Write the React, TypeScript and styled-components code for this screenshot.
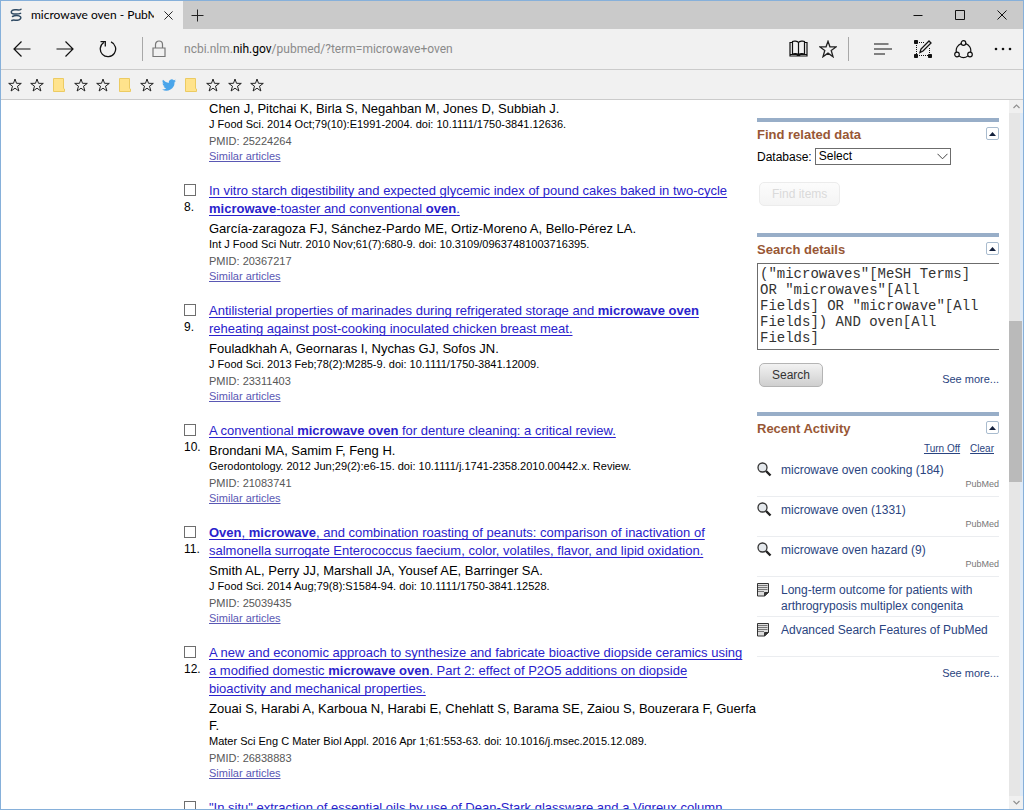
import React from "react";
import styled, { createGlobalStyle } from "styled-components";

const GlobalStyle = createGlobalStyle`
  *, *::before, *::after { box-sizing: border-box; }
  html, body { margin: 0; padding: 0; }
  body { font-family: "Liberation Sans", Arial, sans-serif; color: #000; background: #fff; }
  a { text-decoration-skip-ink: none; }
  button { padding: 0; margin: 0; border: 0; background: none; color: inherit; font: inherit; cursor: pointer; }
`;

/* ---------- browser window ---------- */

const Window = styled.div`
  display: flex;
  flex-direction: column;
  height: 100vh;
  overflow: hidden;
  border: 1px solid #86b0da;
  background: #fff;
`;

const TabStrip = styled.div`
  display: flex;
  height: 28px;
  background: #cacaca;
  font-family: Lato, "Open Sans", sans-serif;
`;

const Tab = styled.div`
  display: flex;
  align-items: center;
  gap: 8px;
  width: 182px;
  padding: 0 8px;
  background: #f1f1f1;
`;

const TabTitle = styled.span`
  flex: 1;
  overflow: hidden;
  white-space: nowrap;
  font-size: 12px;
  line-height: 16px;
`;

const IconButton = styled.button<{ $width: number }>`
  display: flex;
  flex: none;
  align-items: center;
  justify-content: center;
  width: ${(p) => p.$width}px;
  height: 100%;
`;

const Spacer = styled.div`
  flex: 1;
`;

const Toolbar = styled.div`
  display: flex;
  align-items: center;
  height: 41px;
  background: #f1f1f1;
  border-bottom: 1px solid #cbcbcb;
`;

const Divider = styled.div`
  width: 1px;
  height: 24px;
  background: #a8a8a8;
`;

const NavGroup = styled.div`
  display: flex;
  align-items: center;
  height: 100%;
  margin-right: 13px;
`;

const ToolGroup = styled.div`
  display: flex;
  align-items: center;
  height: 100%;
`;

const ToolDivider = styled(Divider)`
  margin: 0 14px 0 5px;
`;

const Address = styled.div`
  flex: 1;
  display: flex;
  align-items: center;
  gap: 18px;
  padding-left: 9px;
  font-family: Roboto, "Open Sans", sans-serif;
  font-size: 12px;
  line-height: 16px;
  color: #8a8a8a;
  b { font-weight: 400; color: #000; }
`;

const FavoritesBar = styled.div`
  display: flex;
  align-items: center;
  gap: 8px;
  height: 30px;
  padding-left: 7px;
  background: #f1f1f1;
  border-bottom: 1px solid #cbcbcb;
`;

const Favorite = styled.a`
  display: block;
  width: 14px;
  height: 14px;
  svg { display: block; }
`;

const Viewport = styled.div`
  flex: 1;
  display: flex;
  min-height: 0;
  overflow: hidden;
`;

const ScrollTrack = styled.div`
  display: flex;
  flex-direction: column;
  flex: none;
  width: 14px;
  background: #e6e6e6;
  border-right: 3px solid #dfeaf6;
`;

const ScrollArrow = styled.button`
  display: flex;
  align-items: center;
  justify-content: center;
  width: 14px;
  height: 13px;
  background: #f0f0f0;
`;

const ScrollRail = styled.div`
  flex: 1;
  display: grid;
  grid-template-rows: 30.5% 23.5% 1fr;
`;

const ScrollThumb = styled.div`
  grid-row: 2;
  width: 13px;
  background: #bababa;
`;

/* ---------- page ---------- */

const Page = styled.div`
  flex: 1;
  display: grid;
  grid-template-columns: minmax(0, 1fr) 242px;
  align-items: start;
  padding: 0 10px 0 182px;
`;

const Results = styled.main`
  display: flex;
  flex-direction: column;
  gap: 18px;
`;

const Article = styled.article`
  display: grid;
  grid-template-columns: 26px minmax(0, 1fr);
`;

const Marker = styled.label`
  display: flex;
  flex-direction: column;
  gap: 4px;
  align-items: flex-start;
  padding-top: 2px;
  font-size: 12px;
  line-height: 14px;
`;

const Tick = styled.input`
  appearance: none;
  width: 12px;
  height: 12px;
  margin: 0 0 0 1px;
  border: 1px solid #6e6e6e;
  background: #fff;
`;

const Index = styled.span`
  padding-left: 1px;
`;

const Title = styled.h2`
  margin: 0 12px 2px 0;
  font-size: 13px;
  font-weight: 400;
  line-height: 18px;
  a { color: #2a22cc; text-decoration: underline; text-underline-offset: 2px; }
`;

const Authors = styled.p`
  margin: 0 -8px 0 0;
  font-size: 13px;
  line-height: 17px;
`;

const Journal = styled.p`
  margin: 0 0 1px;
  font-size: 11px;
  line-height: 15px;
`;

const Pmid = styled.p`
  margin: 0;
  font-size: 11px;
  line-height: 16px;
  color: #575757;
`;

const Similar = styled.p`
  margin: 0;
  font-size: 11px;
  line-height: 15px;
  a { color: #5a58b4; }
`;

/* ---------- side column ---------- */

const Side = styled.aside`
  padding-top: 18px;
`;

const Panel = styled.section`
  border-top: 4px solid #98aec8;
  padding-top: 5px;
`;

const PanelHead = styled.div`
  display: flex;
  justify-content: space-between;
  align-items: flex-start;
  height: 21px;
`;

const PanelTitle = styled.h3`
  margin: 0;
  font-size: 13px;
  line-height: 16px;
  color: #985735;
`;

const Collapse = styled.button`
  display: flex;
  align-items: center;
  justify-content: center;
  width: 13px;
  height: 13px;
  border: 1px solid #a9bccf;
  border-radius: 2px;
`;

const DatabaseRow = styled.div`
  display: flex;
  align-items: center;
  gap: 3px;
  height: 17px;
  font-size: 12px;
`;

const SelectBox = styled.div`
  display: grid;
  width: 136px;
  height: 17px;
  > * { grid-area: 1 / 1; }
  svg { justify-self: end; align-self: center; margin-right: 3px; pointer-events: none; }
`;

const Select = styled.select`
  appearance: none;
  padding: 0 3px;
  border: 1px solid #6c6c6c;
  border-radius: 0;
  background: #fff;
  font: 12px/15px "Liberation Sans", Arial, sans-serif;
  color: #000;
`;

const PillButton = styled.button`
  height: 24px;
  margin-left: 2px;
  padding: 0 12px;
  border: 1px solid #b4b4b4;
  border-radius: 5px;
  background: linear-gradient(#f2f2f2, #cfcfcf);
  font-size: 12px;
  line-height: 22px;
  color: #333;
  &:disabled {
    border-color: #ececec;
    background: linear-gradient(#fcfcfc, #f4f4f4);
    color: #dadada;
    cursor: default;
  }
`;

const FindRow = styled.div`
  padding: 17px 0 27px;
  display: flex;
`;

const QueryClip = styled.div`
  display: flex;
  overflow: hidden;
`;

const Query = styled.textarea`
  flex: none;
  width: calc(100% + 12px);
  height: 87px;
  margin: 0;
  padding: 2px 28px 2px 2px;
  border: 1px solid #6c6c6c;
  resize: none;
  overflow: hidden;
  font: 14px/16px "Liberation Mono", "Courier New", monospace;
  color: #333;
`;

const SearchRow = styled.div`
  display: flex;
  align-items: flex-start;
  justify-content: space-between;
  padding: 13px 0 25px;
`;

const SideLink = styled.a`
  font-size: 11px;
  line-height: 14px;
  color: #2a4480;
  text-decoration: none;
`;

const SearchMore = styled(SideLink)`
  padding-top: 9px;
`;

const ListMore = styled(SideLink)`
  display: block;
  padding-top: 9px;
  text-align: right;
`;

const Actions = styled.div`
  display: flex;
  justify-content: flex-end;
  gap: 10px;
  height: 15px;
  padding-right: 5px;
  font-size: 10px;
  line-height: 13px;
  a { color: #2a4480; }
`;

const ActivityList = styled.ul`
  margin: 0;
  padding: 0;
  list-style: none;
`;

const ActivityItem = styled.li`
  display: grid;
  grid-template-columns: 24px 1fr;
  align-content: start;
  min-height: 40px;
  padding-top: 5px;
  border-bottom: 1px solid #ebedf0;
  svg { display: block; }
`;

const ActivityLink = styled.a`
  font-size: 12px;
  line-height: 16px;
  color: #2a4480;
  text-decoration: none;
`;

const Source = styled.span`
  grid-column: 2;
  text-align: right;
  font-size: 9px;
  line-height: 12px;
  color: #777;
`;

/* ---------- icons ---------- */

const Star = ({ size = 14 }: { size?: number }) => (
  <svg width={size} height={size} viewBox="0 0 14 14" fill="none" stroke="#222" strokeWidth="1" strokeLinejoin="miter">
    <path d="M7 1 8.500 5.300 13.300 5.400 9.500 8.200 10.900 13 7 10.200 3.100 13 4.500 8.200.7 5.400 5.500 5.300Z" />
  </svg>
);

const Folder = () => (
  <svg width="14" height="14" viewBox="0 0 14 14">
    <path d="M1.500.5h10v10l1 .5v2.500h-11z" fill="#ffe38c" stroke="#eccb62" />
  </svg>
);

const Bird = () => (
  <svg width="14" height="14" viewBox="0 0 24 24" fill="#4aa5ea">
    <path d="M24 4.600a10 10 0 0 1-2.800.8 5 5 0 0 0 2.100-2.700 10 10 0 0 1-3.100 1.200 4.900 4.900 0 0 0-8.400 4.500A14 14 0 0 1 1.700 3.200a4.900 4.900 0 0 0 1.500 6.500 4.900 4.900 0 0 1-2.200-.6 4.900 4.900 0 0 0 3.900 4.900 5 5 0 0 1-2.200.1 4.900 4.900 0 0 0 4.600 3.400A9.900 9.900 0 0 1 0 19.500a14 14 0 0 0 21.500-12.400A10 10 0 0 0 24 4.600z" />
  </svg>
);

const Favicon = () => (
  <svg width="14" height="14" viewBox="0 0 14 14" fill="none" stroke="#2f4a63" strokeWidth="1.500" strokeLinecap="round">
    <path d="M12 1.200C9.500 3.300 6 .3 3.300 2.300 1.200 4.300 2.500 5.700 5 6c2.600.2 4.600.2 6.600-.6" />
    <path d="M3.500 8.500c2.500-1.400 6.500-1.200 8 .2 1.200 1.600-.8 3.400-3 3.600-2.200.2-4-.8-5.700.2" />
  </svg>
);

const Close = ({ size }: { size: number }) => (
  <svg width={size} height={size} viewBox="0 0 10 10" stroke="#111" strokeWidth="1">
    <path d="M.5.5l9 9M9.500.5l-9 9" />
  </svg>
);

const Chevron = ({ up }: { up?: boolean }) => (
  <svg width="7" height="5" viewBox="0 0 7 5" fill="none" stroke="#909090" strokeWidth="1.200">
    <path d={up ? "M.5 4 3.500 1l3 3" : "M.5 1l3 3 3-3"} />
  </svg>
);

const Magnifier = () => (
  <svg width="15" height="15" viewBox="0 0 15 15" fill="none">
    <circle cx="5.500" cy="5.500" r="4.500" fill="#e4e8ec" stroke="#333" strokeWidth="1.300" />
    <path d="M9 9l4.500 4.500" stroke="#222" strokeWidth="2.400" />
  </svg>
);

const Note = () => (
  <svg width="12" height="15" viewBox="0 0 12 15" fill="none" stroke="#333">
    <path d="M.5 1.500h11v8.500l-4 4h-7z" fill="#ddd" />
    <path d="M1 3.500h9.500M1 5.500h9.500M1 7.500h9.500M1 9.500h6" stroke="#777" />
    <path d="M7.500 14v-3.500h4z" fill="#333" />
  </svg>
);

/* ---------- content ---------- */

type ArticleData = {
  no?: string;
  title?: React.ReactNode;
  authors?: string;
  journal?: string;
  pmid?: string;
};

const articles: ArticleData[] = [
  {
    authors: "Chen J, Pitchai K, Birla S, Negahban M, Jones D, Subbiah J.",
    journal: "J Food Sci. 2014 Oct;79(10):E1991-2004. doi: 10.1111/1750-3841.12636.",
    pmid: "25224264",
  },
  {
    no: "8.",
    title: <>In vitro starch digestibility and expected glycemic index of pound cakes baked in two-cycle <b>microwave</b>-toaster and conventional <b>oven</b>.</>,
    authors: "García-zaragoza FJ, Sánchez-Pardo ME, Ortiz-Moreno A, Bello-Pérez LA.",
    journal: "Int J Food Sci Nutr. 2010 Nov;61(7):680-9. doi: 10.3109/09637481003716395.",
    pmid: "20367217",
  },
  {
    no: "9.",
    title: <>Antilisterial properties of marinades during refrigerated storage and <b>microwave oven</b> reheating against post-cooking inoculated chicken breast meat.</>,
    authors: "Fouladkhah A, Geornaras I, Nychas GJ, Sofos JN.",
    journal: "J Food Sci. 2013 Feb;78(2):M285-9. doi: 10.1111/1750-3841.12009.",
    pmid: "23311403",
  },
  {
    no: "10.",
    title: <>A conventional <b>microwave oven</b> for denture cleaning: a critical review.</>,
    authors: "Brondani MA, Samim F, Feng H.",
    journal: "Gerodontology. 2012 Jun;29(2):e6-15. doi: 10.1111/j.1741-2358.2010.00442.x. Review.",
    pmid: "21083741",
  },
  {
    no: "11.",
    title: <><b>Oven</b>, <b>microwave</b>, and combination roasting of peanuts: comparison of inactivation of salmonella surrogate Enterococcus faecium, color, volatiles, flavor, and lipid oxidation.</>,
    authors: "Smith AL, Perry JJ, Marshall JA, Yousef AE, Barringer SA.",
    journal: "J Food Sci. 2014 Aug;79(8):S1584-94. doi: 10.1111/1750-3841.12528.",
    pmid: "25039435",
  },
  {
    no: "12.",
    title: <>A new and economic approach to synthesize and fabricate bioactive diopside ceramics using a modified domestic <b>microwave oven</b>. Part 2: effect of P2O5 additions on diopside bioactivity and mechanical properties.</>,
    authors: "Zouai S, Harabi A, Karboua N, Harabi E, Chehlatt S, Barama SE, Zaiou S, Bouzerara F, Guerfa F.",
    journal: "Mater Sci Eng C Mater Biol Appl. 2016 Apr 1;61:553-63. doi: 10.1016/j.msec.2015.12.089.",
    pmid: "26838883",
  },
  {
    no: "",
    title: <>"In situ" extraction of essential oils by use of Dean-Stark glassware and a Vigreux column</>,
  },
];

const activity = [
  { text: "microwave oven cooking (184)", source: "PubMed" },
  { text: "microwave oven (1331)", source: "PubMed" },
  { text: "microwave oven hazard (9)", source: "PubMed" },
  { text: "Long-term outcome for patients with arthrogryposis multiplex congenita" },
  { text: "Advanced Search Features of PubMed" },
];

const favorites = ["star", "star", "folder", "star", "star", "folder", "star", "bird", "folder", "star", "star", "star"];

const ArticleRow = ({ no, title, authors, journal, pmid }: ArticleData) => (
  <Article>
    {title ? (
      <Marker>
        <Tick type="checkbox" aria-label="Select article" />
        <Index>{no}</Index>
      </Marker>
    ) : (
      <span />
    )}
    <div>
      {title && <Title><a href="#article">{title}</a></Title>}
      {authors && <Authors>{authors}</Authors>}
      {journal && <Journal>{journal}</Journal>}
      {pmid && <Pmid>PMID: {pmid}</Pmid>}
      {pmid && <Similar><a href="#similar">Similar articles</a></Similar>}
    </div>
  </Article>
);

const PanelHeader = ({ children }: { children: React.ReactNode }) => (
  <PanelHead>
    <PanelTitle>{children}</PanelTitle>
    <Collapse aria-label="Collapse">
      <svg width="7" height="4" viewBox="0 0 7 4"><path d="M0 4 3.500 0 7 4z" fill="#14213d" /></svg>
    </Collapse>
  </PanelHead>
);

export default function App() {
  return (
    <Window>
      <GlobalStyle />
      <TabStrip>
        <Tab>
          <Favicon />
          <TabTitle>microwave oven - PubMed</TabTitle>
          <IconButton $width={13} aria-label="Close tab"><Close size={9} /></IconButton>
        </Tab>
        <IconButton $width={28} aria-label="New tab">
          <svg width="13" height="13" viewBox="0 0 13 13" stroke="#222"><path d="M6.500.5v12M.5 6.500h12" /></svg>
        </IconButton>
        <Spacer />
        <IconButton $width={42} aria-label="Minimize">
          <svg width="10" height="10" viewBox="0 0 10 10" stroke="#111"><path d="M.5 5.500h9" /></svg>
        </IconButton>
        <IconButton $width={42} aria-label="Maximize">
          <svg width="10" height="10" viewBox="0 0 10 10" fill="none" stroke="#111"><path d="M.5.5h9v9h-9z" /></svg>
        </IconButton>
        <IconButton $width={42} aria-label="Close"><Close size={10} /></IconButton>
      </TabStrip>

      <Toolbar>
        <NavGroup>
          <IconButton $width={42} aria-label="Back">
            <svg width="18" height="16" viewBox="0 0 18 16" fill="none" stroke="#111" strokeWidth="1.200"><path d="M17.500 8H1M8.500.5 1 8l7.500 7.500" /></svg>
          </IconButton>
          <IconButton $width={44} aria-label="Forward">
            <svg width="18" height="16" viewBox="0 0 18 16" fill="none" stroke="#111" strokeWidth="1.200"><path d="M.5 8H17M9.500.5 17 8l-7.500 7.500" /></svg>
          </IconButton>
          <IconButton $width={42} aria-label="Refresh">
            <svg width="18" height="18" viewBox="0 0 18 18" fill="none" stroke="#111" strokeWidth="1.300"><path d="M12 1.900a7.700 7.700 0 1 1-7.200.6M1.500 1.700h4.800v4.800" /></svg>
          </IconButton>
        </NavGroup>
        <Divider />
        <Address>
          <svg width="14" height="18" viewBox="0 0 14 18" fill="none" stroke="#777" strokeWidth="1.200"><path d="M1 8h12v8.500H1zM3.500 8V4.500a3.500 3.500 0 0 1 7 0V8" /></svg>
          <span>ncbi.nlm.<b>nih.gov</b>/pubmed/?term=microwave+oven</span>
        </Address>
        <ToolGroup>
          <IconButton $width={30} aria-label="Reading view">
            <svg width="19" height="18" viewBox="0 0 19 18" fill="none" stroke="#111" strokeWidth="1.200"><path d="M9.500 2.500C8.500.8 4.500.8 3.500 1.500v12.500c2-.7 5-.5 6 1 1-1.500 4-1.700 6-1V1.500c-1-.7-5-.7-6 1zM9.500 2.500V15M3.500 2.500h-2.500v13.500h17V2.500h-2.500M1.500 14.500h6l2 1 2-1h6" /></svg>
          </IconButton>
          <IconButton $width={30} aria-label="Add to favorites"><Star size={18} /></IconButton>
          <ToolDivider />
          <IconButton $width={40} aria-label="Hub">
            <svg width="18" height="12" viewBox="0 0 18 12" stroke="#111" strokeWidth="1.200"><path d="M0 1h14.500M0 6h18M0 11h11" /></svg>
          </IconButton>
          <IconButton $width={40} aria-label="Make a web note">
            <svg width="18" height="18" viewBox="0 0 18 18" fill="none" stroke="#111">
              <path d="M3 2.500h8M2.500 3v12M3 15.500h12M15.500 8v7" strokeDasharray="1 1" />
              <path d="M.5.5h3v3h-3zM.5 14.500h3v3h-3zM14.500 14.500h3v3h-3z" fill="#111" />
              <path d="M6 12.500l1-3.500 8-8 2 2-8 8z" fill="#f1f1f1" strokeWidth="1.300" />
            </svg>
          </IconButton>
          <IconButton $width={40} aria-label="Share">
            <svg width="19" height="19" viewBox="0 0 19 19" fill="none" stroke="#111" strokeWidth="1.200">
              <circle cx="9.500" cy="3" r="2.300" /><circle cx="3" cy="14.500" r="2.300" /><circle cx="16" cy="14.500" r="2.300" />
              <path d="M7.200 3.600A7.300 7.300 0 0 0 2.400 12.200M11.800 3.600a7.300 7.300 0 0 1 4.800 8.600M5 15.900a7.300 7.300 0 0 0 9 0" />
            </svg>
          </IconButton>
          <IconButton $width={40} aria-label="More">
            <svg width="18" height="4" viewBox="0 0 18 4" fill="#111"><circle cx="2" cy="2" r="1.300" /><circle cx="9" cy="2" r="1.300" /><circle cx="16" cy="2" r="1.300" /></svg>
          </IconButton>
        </ToolGroup>
      </Toolbar>

      <FavoritesBar>
        {favorites.map((kind, i) => (
          <Favorite key={i} href="#favorite" aria-label="Favorite">
            {kind === "star" ? <Star /> : kind === "folder" ? <Folder /> : <Bird />}
          </Favorite>
        ))}
      </FavoritesBar>

      <Viewport>
        <Page>
          <Results>
            {articles.map((a, i) => <ArticleRow key={i} {...a} />)}
          </Results>
          <Side>
            <Panel>
              <PanelHeader>Find related data</PanelHeader>
              <DatabaseRow>
                <label htmlFor="database">Database:</label>
                <SelectBox>
                  <Select id="database"><option>Select</option></Select>
                  <svg width="11" height="7" viewBox="0 0 11 7" fill="none" stroke="#444"><path d="M.5.8l5 5 5-5" /></svg>
                </SelectBox>
              </DatabaseRow>
              <FindRow>
                <PillButton disabled>Find items</PillButton>
              </FindRow>
            </Panel>
            <Panel>
              <PanelHeader>Search details</PanelHeader>
              <QueryClip>
                <Query
                  aria-label="Search details"
                  defaultValue={'("microwaves"[MeSH Terms] OR "microwaves"[All Fields] OR "microwave"[All Fields]) AND oven[All Fields]'}
                />
              </QueryClip>
              <SearchRow>
                <PillButton>Search</PillButton>
                <SearchMore href="#details">See more...</SearchMore>
              </SearchRow>
            </Panel>
            <Panel>
              <PanelHeader>Recent Activity</PanelHeader>
              <Actions>
                <a href="#off">Turn Off</a>
                <a href="#clear">Clear</a>
              </Actions>
              <ActivityList>
                {activity.map((item) => (
                  <ActivityItem key={item.text}>
                    {item.source ? <Magnifier /> : <Note />}
                    <ActivityLink href="#activity">{item.text}</ActivityLink>
                    {item.source && <Source>{item.source}</Source>}
                  </ActivityItem>
                ))}
              </ActivityList>
              <ListMore href="#history">See more...</ListMore>
            </Panel>
          </Side>
        </Page>
        <ScrollTrack>
          <ScrollArrow aria-label="Scroll up"><Chevron up /></ScrollArrow>
          <ScrollRail><ScrollThumb /></ScrollRail>
          <ScrollArrow aria-label="Scroll down"><Chevron /></ScrollArrow>
        </ScrollTrack>
      </Viewport>
    </Window>
  );
}
